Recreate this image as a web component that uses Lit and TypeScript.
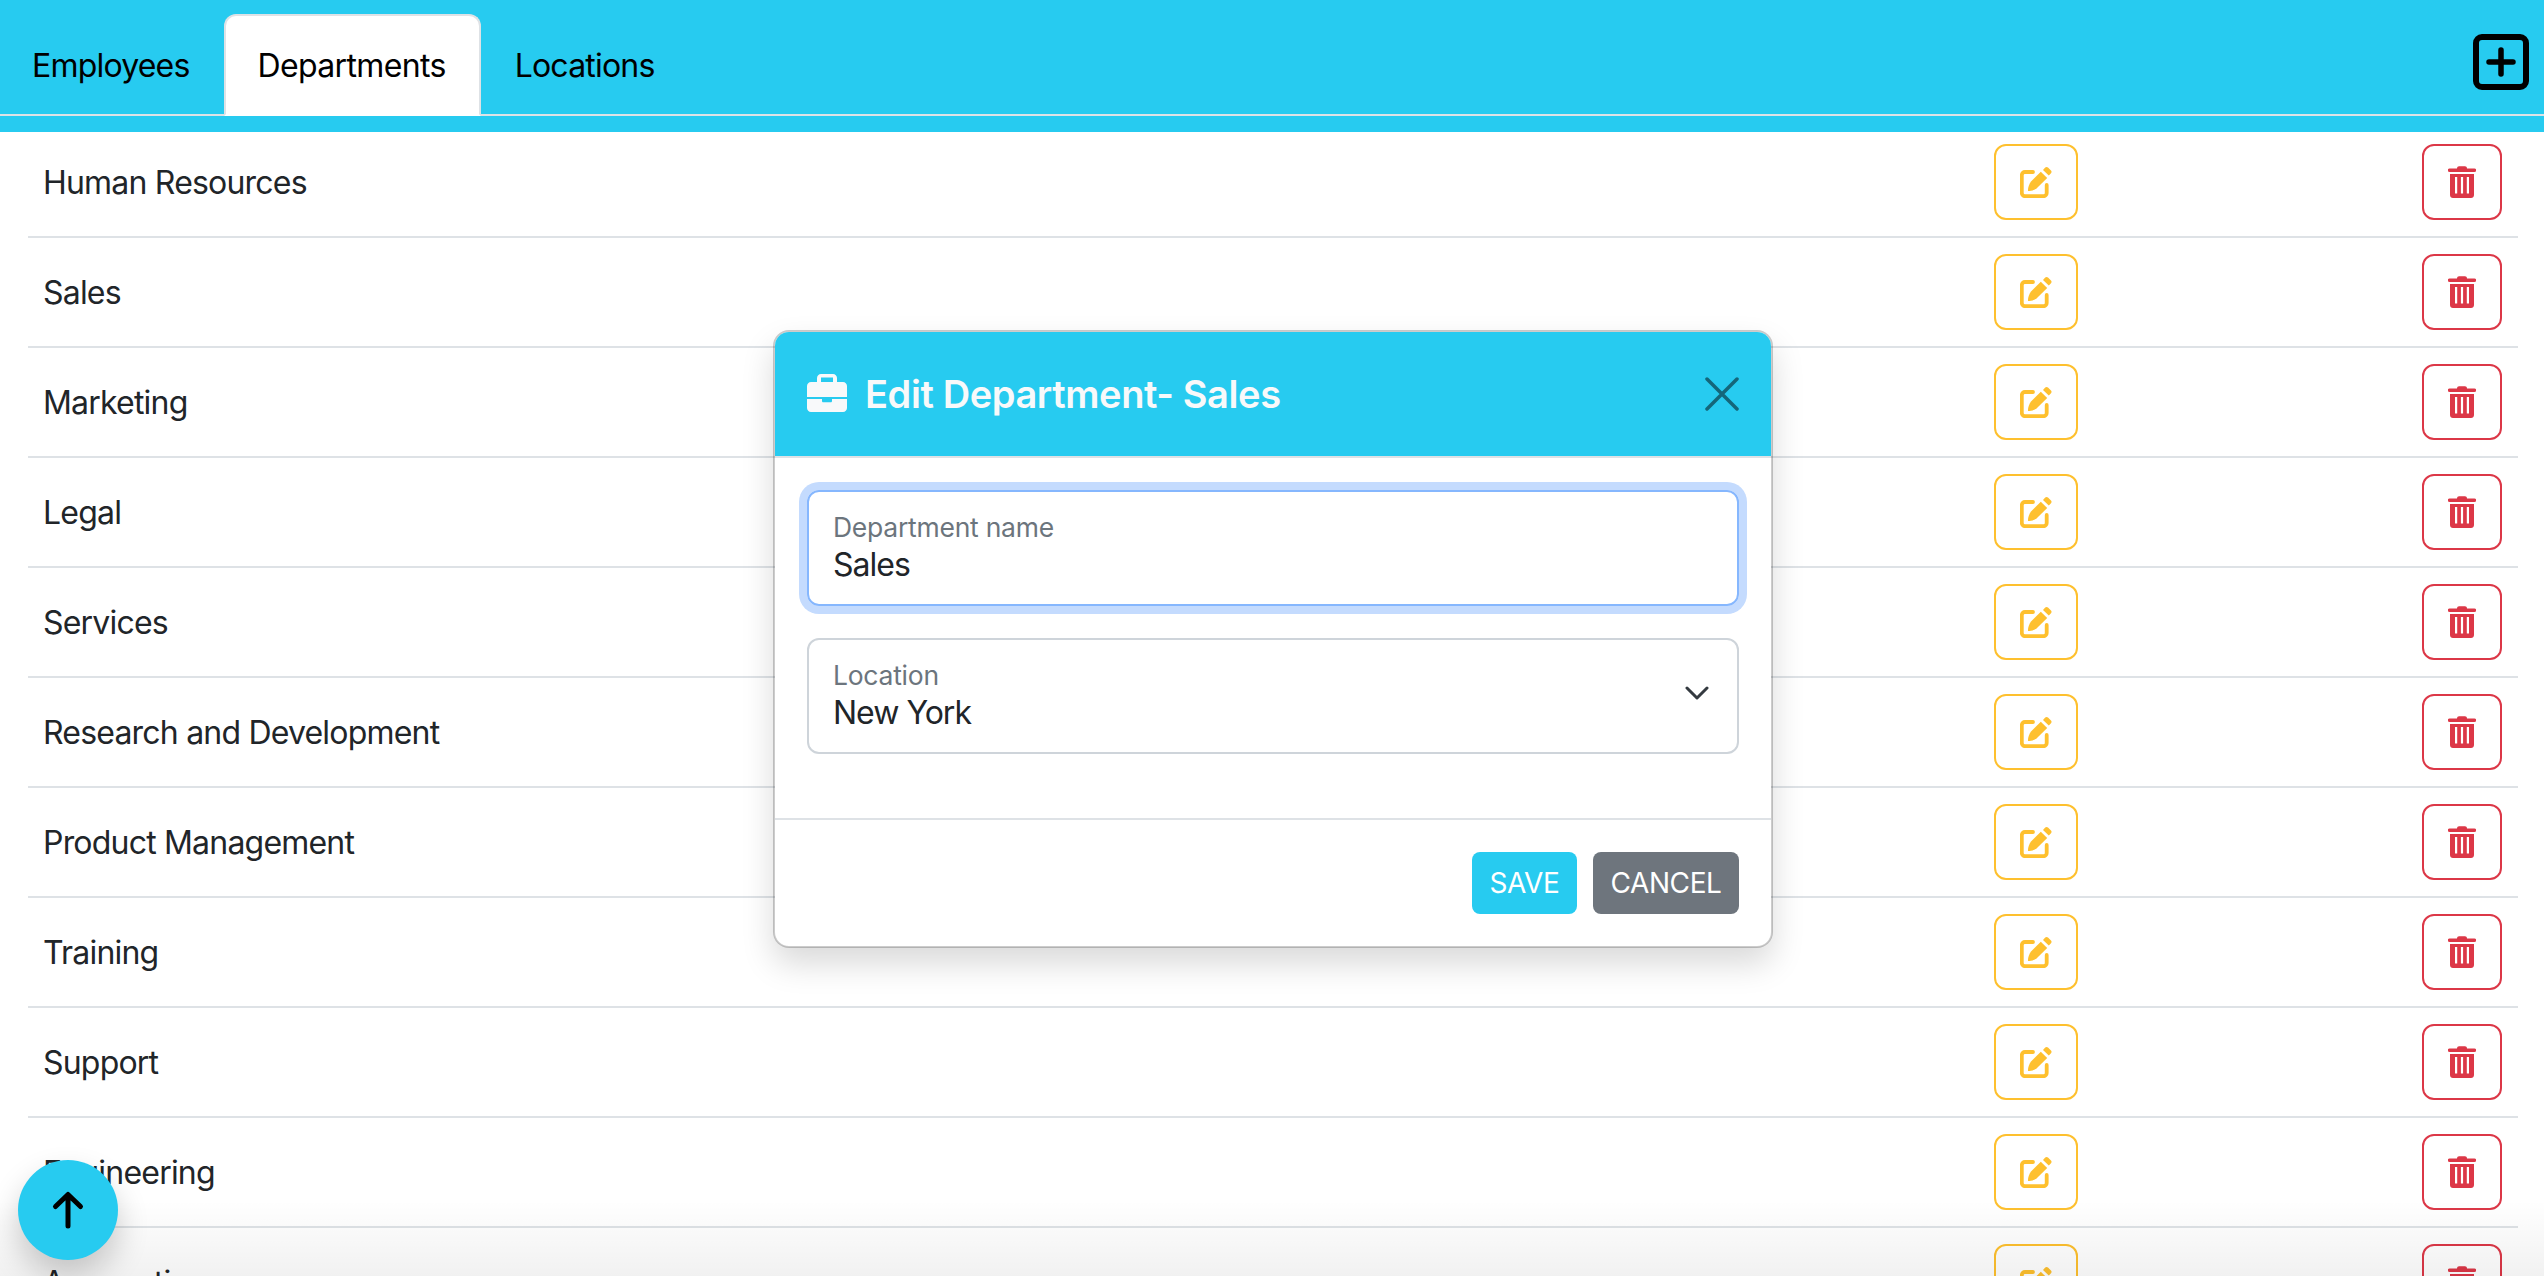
import { LitElement, html, css, svg } from "lit";
import { customElement } from "lit/decorators.js";

const DEPARTMENTS = [
  "Human Resources", "Sales", "Marketing", "Legal", "Services",
  "Research and Development", "Product Management", "Training",
  "Support", "Engineering", "Accounting",
];

const editIcon = svg`<svg class="ico" width="32" height="32" viewBox="0 0 32 32" fill="none">
  <path d="M13 6H5a3.2 3.2 0 0 0-3.2 3.2V27A3.2 3.2 0 0 0 5 30.200h18.500a3.200 3.200 0 0 0 3.200-3.200v-8" stroke="currentColor" stroke-width="3.800" stroke-linecap="round"/>
  <path d="M20.800 5.800 27.200 12 16.500 22.500C14 24.500 11 25 8 25 7.800 22 9 18 11 15.500Z" fill="currentColor"/>
  <path d="M23 4 25.200 1.600C26 .8 27.200 .8 28 1.600L31 4.500C31.800 5.300 31.800 6.300 31 7.200L28.800 9.500Z" fill="currentColor"/>
</svg>`;

const trashIcon = svg`<svg class="ico" width="28" height="32" viewBox="0 0 28 32">
  <path fill="currentColor" fill-rule="evenodd" d="M9 2.500C9 1 10 .3 11 .3h6c1 0 2 .7 2 2.200h7.500a1.500 1.500 0 0 1 0 3.500h-25a1.500 1.500 0 0 1 0-3.500ZM2 8h24v21c0 1.700-1.300 3-3 3H5c-1.700 0-3-1.300-3-3ZM7 11v16.500h2.200V11Zm5.900 0v16.500h2.200V11Zm5.900 0v16.500H21V11Z"/>
</svg>`;

@customElement("app-root")
export class AppRoot extends LitElement {
  static styles = css`
    :host {
      display: block;
      position: relative;
      height: 1276px;
      overflow: hidden;
      background: #fff;
      font-family: Inter, "Liberation Sans", sans-serif;
      color: #212529;
      font-size: 32px;
    }
    .top {
      background: #27cbf0;
      height: 132px;
      box-sizing: border-box;
      padding-top: 14px;
      position: relative;
    }
    .tabs {
      display: flex;
      height: 102px;
      box-sizing: border-box;
      border-bottom: 2px solid #dee2e6;
    }
    .tab {
      box-sizing: border-box;
      height: 102px;
      padding: 0 32px;
      border: 2px solid transparent;
      border-radius: 12px 12px 0 0;
      display: flex;
      align-items: center;
      color: #000;
      font-size: 32px;
      letter-spacing: -0.8px;
    }
    .tab:first-child {
      margin-left: -2px;
    }
    .tab.active {
      background: #fff;
      border-color: #dee2e6 #dee2e6 #fff;
      padding: 0 33px 0 32px;
      letter-spacing: -0.65px;
    }
    .add {
      position: absolute;
      left: 2473px;
      top: 34px;
      display: block;
    }
    .list {
      padding: 0 26px 0 28px;
    }
    .row {
      display: grid;
      grid-template-columns: 1fr 428px 96px;
      align-items: center;
      padding: 16px 0 16px 15px;
      border-bottom: 2px solid #dee2e6;
      letter-spacing: -0.8px;
    }
    .row:first-child {
      padding-top: 12px;
    }
    .btn {
      height: 76px;
      box-sizing: border-box;
      border: 2px solid;
      border-radius: 12px;
      display: flex;
      align-items: center;
      justify-content: center;
    }
    .btn.edit {
      width: 84px;
      color: #fec02e;
    }
    .btn.del {
      width: 80px;
      color: #dc3747;
    }
    .ico {
      display: block;
    }
    .modal {
      position: absolute;
      left: 773px;
      top: 330px;
      width: 1000px;
      box-sizing: border-box;
      background: #fff;
      border: 2px solid rgba(0, 0, 0, 0.2);
      border-radius: 16px;
      box-shadow: 0 16px 32px rgba(0, 0, 0, 0.15);
      background-clip: padding-box;
    }
    .m-head {
      height: 126px;
      box-sizing: border-box;
      background: #27cbf0;
      border-bottom: 2px solid #dee2e6;
      border-radius: 14px 14px 0 0;
      display: flex;
      align-items: center;
      padding: 0 32px;
      color: #f8f9fa;
    }
    .brief {
      display: block;
      margin-top: -2px;
    }
    .close {
      display: block;
    }
    .m-title {
      font-size: 38px;
      font-weight: 600;
      margin-left: 18px;
      flex: 1;
      letter-spacing: -0.4px;
    }
    .m-body {
      padding: 32px 32px 64px;
      display: flex;
      flex-direction: column;
      gap: 32px;
    }
    .field {
      position: relative;
      height: 116px;
      box-sizing: border-box;
      border: 2px solid #ced4da;
      border-radius: 12px;
      padding: 17px 24px 0;
    }
    .field.focus {
      border-color: #86b7fe;
      box-shadow: 0 0 0 8px #c4dbfe;
    }
    .label {
      font-size: 26.500px;
      line-height: 36px;
      color: #6c757d;
      letter-spacing: -0.25px;
    }
    .value {
      font-size: 32px;
      line-height: 40px;
      color: #212529;
      letter-spacing: -1px;
    }
    .chev {
      position: absolute;
      right: 28px;
      top: 46px;
      display: block;
    }
    .m-foot {
      border-top: 2px solid #dee2e6;
      padding: 32px;
      display: flex;
      justify-content: flex-end;
      gap: 16px;
    }
    .act {
      height: 62px;
      border-radius: 8px;
      display: flex;
      align-items: center;
      justify-content: center;
      color: #fff;
      font-size: 28px;
      letter-spacing: -0.4px;
      box-sizing: border-box;
    }
    .act.save {
      width: 105px;
      background: #27cbf0;
    }
    .act.cancel {
      width: 146px;
      background: #6e757d;
    }
    .bottom-fade {
      position: absolute;
      left: 0;
      right: 0;
      bottom: 0;
      height: 76px;
      background: linear-gradient(to bottom, rgba(0, 0, 0, 0), rgba(0, 0, 0, 0.055));
      pointer-events: none;
    }
    .fab {
      position: absolute;
      left: 18px;
      top: 1160px;
      width: 100px;
      height: 100px;
      border-radius: 50%;
      background: #27cbf0;
      box-shadow: 0 16px 32px rgba(0, 0, 0, 0.2);
      display: flex;
      align-items: center;
      justify-content: center;
    }
  `;

  render() {
    return html`
      <div class="top">
        <div class="tabs">
          <div class="tab">Employees</div>
          <div class="tab active">Departments</div>
          <div class="tab">Locations</div>
        </div>
        <svg class="add" width="56" height="56" viewBox="0 0 56 56" fill="none" stroke="#000">
          <rect x="3" y="3" width="50" height="50" rx="6" stroke-width="6"/>
          <path d="M28 16v24M16 28h24" stroke-width="5.500" stroke-linecap="round"/>
        </svg>
      </div>
      <div class="list">
        ${DEPARTMENTS.map(
          (d) => html`<div class="row">
            <div>${d}</div>
            <div class="btn edit">${editIcon}</div>
            <div class="btn del">${trashIcon}</div>
          </div>`
        )}
      </div>
      <div class="bottom-fade"></div>
      <div class="fab">
        <svg width="36" height="42" viewBox="0 0 36 42" fill="none" stroke="#000" stroke-width="5" stroke-linecap="round" stroke-linejoin="round">
          <path d="M18 37V6M5.500 17.500 18 5.500 30.500 17.500"/>
        </svg>
      </div>
      <div class="modal">
        <div class="m-head">
          <svg class="brief" width="40" height="38" viewBox="0 0 40 38">
            <path fill="#f8f9fa" fill-rule="evenodd" d="M10 8V4c0-2.200 1.800-4 4-4h12c2.200 0 4 1.800 4 4v4h6c2.200 0 4 1.800 4 4v11H0V12c0-2.200 1.800-4 4-4ZM14 3.500V8h12V3.500ZM0 25h15v2c0 .8.500 1.300 1.300 1.300h7.400c.8 0 1.300-.5 1.300-1.300v-2h15v9c0 2.200-1.800 4-4 4H4c-2.200 0-4-1.800-4-4Z"/>
          </svg>
          <div class="m-title">Edit Department- Sales</div>
          <svg class="close" width="34" height="34" viewBox="0 0 34 34" fill="none" stroke="#14667a" stroke-width="3.500" stroke-linecap="round">
            <path d="M2 2 32 32M32 2 2 32"/>
          </svg>
        </div>
        <div class="m-body">
          <div class="field focus">
            <div class="label">Department name</div>
            <div class="value">Sales</div>
          </div>
          <div class="field">
            <div class="label">Location</div>
            <div class="value">New York</div>
            <svg class="chev" width="24" height="14" viewBox="0 0 24 14" fill="none" stroke="#343a40" stroke-width="3" stroke-linecap="round" stroke-linejoin="round">
              <path d="M2 2 12 12 22 2"/>
            </svg>
          </div>
        </div>
        <div class="m-foot">
          <div class="act save">SAVE</div>
          <div class="act cancel">CANCEL</div>
        </div>
      </div>
    `;
  }
}
